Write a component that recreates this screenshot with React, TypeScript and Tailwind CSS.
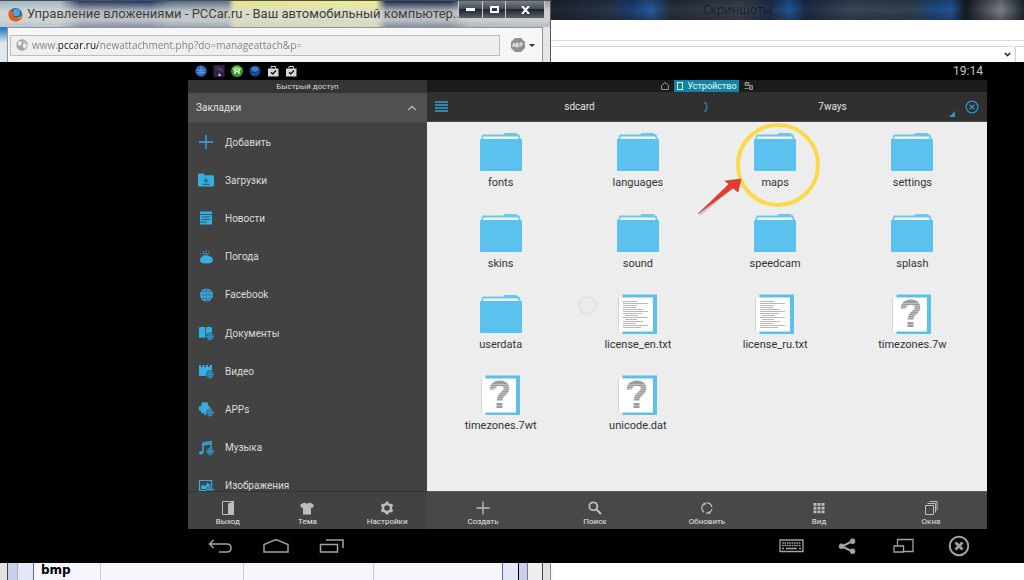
import type { ReactNode } from 'react';
import { ChevronDown, ChevronUp } from 'lucide-react';

type Entry = {
  name: string;
  kind: 'folder' | 'text' | 'unknown';
  marked?: boolean;
};

const BOOKMARKS: { label: string; icon: ReactNode }[] = [
  { label: 'Добавить', icon: <path d="M8 1v14M1 8h14" fill="none" stroke="currentColor" strokeWidth="1.3" /> },
  {
    label: 'Загрузки',
    icon: (
      <>
        <path d="M0 2.5Q0 1.5 1 1.5h4.5l1.5 1.7h8q1 0 1 1v9.3q0 1-1 1H1q-1 0-1-1z" fill="currentColor" />
        <path d="M8 5.5v4M6 8l2 2 2-2M4.5 12.3h7" fill="none" stroke="#2b6480" strokeWidth="1.2" />
      </>
    ),
  },
  {
    label: 'Новости',
    icon: (
      <>
        <path d="M2 1.5h12v13H2z" fill="currentColor" />
        <path d="M2 4.5h12M3.5 7h9M3.5 9.5h9M2 12h7" stroke="#424242" strokeWidth=".8" />
      </>
    ),
  },
  {
    label: 'Погода',
    icon: (
      <>
        <path d="M2 11a3.6 3.6 0 0 1 2.4-3.4C5 5.8 10.5 5.8 11.5 7.6A3.7 3.7 0 0 1 14.8 11c0 2.7-2.5 3.5-6.4 3.5S2 13.7 2 11z" fill="currentColor" />
        <path d="M3.5 5.5L2.5 4.5M5.5 3.500L5 2M8 3V1.300M10.500 3.800l.8-1.300M5 5.500c1.500-1.500 4-1.500 5.500 0" fill="none" stroke="currentColor" strokeWidth="1" />
      </>
    ),
  },
  {
    label: 'Facebook',
    icon: (
      <>
        <circle cx="8.500" cy="8" r="6.500" fill="currentColor" />
        <path d="M8.500 1.500v13M2 8h13M3.200 4.500h10.600M3.200 11.500h10.600M8.500 1.500C4.200 5 4.200 11 8.500 14.500M8.500 1.500c4.300 3.500 4.300 9.500 0 13" fill="none" stroke="#3b6a86" strokeWidth=".7" />
      </>
    ),
  },
  {
    label: 'Документы',
    icon: (
      <>
        <path d="M1 2.500q3.500-1.500 6.300 0v10.500q-3-1.200-6.300 0zM8 2.500q3-1.500 6 0v5H11q-3 1-3 5z" fill="currentColor" />
        <SmallGlobe />
      </>
    ),
  },
  {
    label: 'Видео',
    icon: (
      <>
        <path d="M1 2h2v2h1.500V2h2v2H8V2h2v2h1.500V2H14v5.500h-3q-3 1-2.800 5.500H1z" fill="currentColor" />
        <SmallGlobe />
      </>
    ),
  },
  {
    label: 'APPs',
    icon: (
      <>
        <path d="M3 5.500a3.500 4 0 0 1 7.500 0h1.800v3q-4 0-4.300 5.500H6.500l-.5-2H3V10L.8 9V5.500z" fill="currentColor" />
        <path d="M4 1l1.200 2M9.500 1L8.300 3" stroke="currentColor" strokeWidth=".8" />
        <SmallGlobe />
      </>
    ),
  },
  {
    label: 'Музыка',
    icon: (
      <>
        <path d="M5 12.500V3l8-1.500v8M5 5l8-1.500" fill="none" stroke="currentColor" strokeWidth="1.400" />
        <ellipse cx="3.200" cy="12.700" rx="2.200" ry="1.700" fill="currentColor" />
        <SmallGlobe />
      </>
    ),
  },
  {
    label: 'Изображения',
    icon: (
      <>
        <path d="M1.500 2.500h12v10h-12z" fill="none" stroke="currentColor" strokeWidth="1.200" />
        <path d="M3 11V8.500l2-2 2 2 2.500-4L12 7v4z" fill="currentColor" />
        <SmallGlobe />
      </>
    ),
  },
];

const FILES: Entry[] = [
  { name: 'fonts', kind: 'folder' },
  { name: 'languages', kind: 'folder' },
  { name: 'maps', kind: 'folder', marked: true },
  { name: 'settings', kind: 'folder' },
  { name: 'skins', kind: 'folder' },
  { name: 'sound', kind: 'folder' },
  { name: 'speedcam', kind: 'folder' },
  { name: 'splash', kind: 'folder' },
  { name: 'userdata', kind: 'folder' },
  { name: 'license_en.txt', kind: 'text' },
  { name: 'license_ru.txt', kind: 'text' },
  { name: 'timezones.7w', kind: 'unknown' },
  { name: 'timezones.7wt', kind: 'unknown' },
  { name: 'unicode.dat', kind: 'unknown' },
];

const SIDE_ACTIONS: { label: string; icon: ReactNode }[] = [
  {
    label: 'Выход',
    icon: (
      <>
        <path d="M2.500 1.500h11v13h-11z" fill="none" stroke="currentColor" strokeWidth="1" />
        <path d="M8 3.500l5.500-2v13H8z" fill="currentColor" />
      </>
    ),
  },
  { label: 'Тема', icon: <path d="M5 2.500q3 2 6 0l4 2.500-1.500 3-1.500-.5v7H4v-7l-1.500.5L1 5z" fill="currentColor" /> },
  {
    label: 'Настройки',
    icon: (
      <>
        <circle cx="8" cy="8" r="4" fill="none" stroke="currentColor" strokeWidth="2.400" />
        <path d="M8 1.500v2.300M8 12.200v2.300M2.400 4.700l2 1.200M11.600 10.100l2 1.200M2.400 11.300l2-1.200M11.600 5.900l2-1.200" stroke="currentColor" strokeWidth="2.800" />
      </>
    ),
  },
];

const MAIN_ACTIONS: { label: string; icon: ReactNode }[] = [
  { label: 'Создать', icon: <path d="M8 1.500v13M1.500 8h13" stroke="currentColor" strokeWidth="1.300" /> },
  {
    label: 'Поиск',
    icon: (
      <>
        <circle cx="6.300" cy="6.300" r="4" fill="none" stroke="currentColor" strokeWidth="1.800" />
        <path d="M9 9l5 5" stroke="currentColor" strokeWidth="2.200" />
      </>
    ),
  },
  {
    label: 'Обновить',
    icon: (
      <>
        <path d="M5 12.200A5 5 0 0 1 5.500 3.600M7.500 3a5 5 0 0 1 5.300 4M13 9a5 5 0 0 1-6 4" fill="none" stroke="currentColor" strokeWidth="1.300" />
        <path d="M4 3l3-.5-1 3zM12 13.500l-3 .3 1-3z" fill="currentColor" />
      </>
    ),
  },
  {
    label: 'Вид',
    icon: <path d="M2.500 3h3v2.800h-3zM6.500 3h3v2.800h-3zM10.500 3h3v2.800h-3zM2.500 6.700h3v2.800h-3zM6.500 6.700h3v2.800h-3zM10.500 6.700h3v2.800h-3zM2.500 10.400h3v2.800h-3zM6.500 10.400h3v2.800h-3zM10.500 10.400h3v2.800h-3z" fill="currentColor" />,
  },
  {
    label: 'Окна',
    icon: <path d="M2.500 5.500h8v9h-8zM4.500 3.500h8v9M6.500 1.500h7.500v9" fill="none" stroke="currentColor" strokeWidth="1" />,
  },
];

function SmallGlobe() {
  return (
    <g>
      <circle cx="12" cy="11.500" r="3.800" fill="#2c6f8e" />
      <path d="M12 7.700v7.600M8.200 11.500h7.600M12 7.700c-2.500 2-2.500 5.600 0 7.600c2.500-2 2.500-5.600 0-7.600" fill="none" stroke="#3f9cc4" strokeWidth=".7" />
    </g>
  );
}

function Glyph({ children }: { children: ReactNode }) {
  return (
    <svg aria-hidden="true" className="w-4 h-4 shrink-0" viewBox="0 0 16 16">
      {children}
    </svg>
  );
}

function FolderIcon() {
  return (
    <svg aria-hidden="true" className="w-[42px] h-10" viewBox="0 0 42 40">
      <path d="M1 8l1.500-5.500H23L25 1h11l3.500 2L41 8z" fill="#68c9ee" />
      <path d="M3 7.500l.5-3H38l1 3z" fill="#f2f4f2" />
      <rect y="7" width="42" height="32" rx="1" fill="#5bc1ee" />
    </svg>
  );
}

function PageIcon({ kind }: { kind: 'text' | 'unknown' }) {
  return (
    <svg aria-hidden="true" className="w-[42px] h-10" viewBox="0 0 42 40">
      <path d="M5.500 .5H40V40H5.500z" fill="#5bc1e9" />
      <path d="M2 3.500h34v34H2z" fill="#fff" />
      <path d="M1.500 3.500v34" stroke="#d4d4d4" strokeWidth="1" />
      {kind === 'text' ? (
        <path
          d="M6 7.500h14M6 9.500h25M6 11.500h14M6 13.500h13M6 15.500h20M6 17.500h25M6 19.500h19M8 21.500h13M6 23.500h25M8 25.500h12M6 27.500h20M6 29.500h13M6 31.500h25M6 33.500h18"
          stroke="#b0b0b0"
          strokeWidth=".9"
        />
      ) : (
        <>
          <path d="M12.500 14.500C11.500 6.500 27 6 26.500 13.500C26.500 19 19.500 18.500 19.500 25.500" fill="none" stroke="#9c9c9c" strokeWidth="5.500" />
          <path d="M16.500 28h6v5h-6z" fill="#9c9c9c" />
          <path d="M8 9.500h22M8 11.500h22M8 13.500h22M8 15.500h22M8 17.500h22M8 19.500h22M8 21.500h22M8 23.500h22M8 30.500h22" stroke="#fff" strokeWidth=".6" opacity=".6" />
        </>
      )}
    </svg>
  );
}

function PlayBag() {
  return (
    <svg aria-hidden="true" className="w-[18px] h-3" viewBox="0 0 18 12">
      <path d="M4 3.500h10.500v8H4z" fill="#d8d8d8" />
      <path d="M7 3.500v-2h4.500v2" fill="none" stroke="#d8d8d8" strokeWidth="1" />
      <path d="M7 7.300l1.700 1.700L12 5.500" fill="none" stroke="#111" strokeWidth="1.300" />
    </svg>
  );
}

function BrowserWindow() {
  return (
    <section className="w-[551px] min-w-0 flex flex-col border-t border-[#4b4f52] border-r border-r-[#55585c] bg-[linear-gradient(90deg,transparent_8px,#e3e5e7_8px),linear-gradient(180deg,#2f80bd_28px,#dfe7ee_42px)]">
      <header className="h-[26px] flex items-start bg-[linear-gradient(180deg,rgba(225,225,225,0)_0%,rgba(220,220,216,.8)_40%,rgba(215,215,212,.85)_75%,rgba(200,208,216,.6)_100%),linear-gradient(90deg,#9db4c8_0,#a8b6c0_60px,#27395c_80px,#1b3263_150px,#526a83_170px,#5d7488_228px,#e6e588_234px,#eeee8c_376px,#192c50_386px,#182949_450px,#8c9195_470px,#9aa0a5_551px)]">
        <div className="flex-1 flex items-center gap-1 pl-2 h-[26px] min-w-0">
          <svg aria-hidden="true" className="w-[15px] h-[15px] shrink-0" viewBox="0 0 16 16">
            <circle cx="8" cy="8" r="7" fill="#2565a8" />
            <circle cx="9" cy="6" r="3.800" fill="#48a8db" />
            <path d="M1 4C-1 11 3 15.500 8 15.500c5 0 8-4 7.500-8.500-.8 3-3 4.500-5.500 4.500C7 11.500 5 10 5 8l2-1-2-1.500L2.500 3z" fill="#e65f15" />
            <path d="M15.500 7c-.8 3-3 4.500-5.500 4.500 2 1.500 4 .5 5.500-4.500z" fill="#f9c42c" />
          </svg>
          <h1 className="text-[13px] text-[#3d3d3d] whitespace-nowrap font-['Roboto',sans-serif]">Управление вложениями - PCCar.ru - Ваш автомобильный компьютер...</h1>
        </div>
        <div className="flex shrink-0 h-[18px] mr-[5px] border border-t-0 border-[#c8ccd0] rounded-b-xs divide-x divide-[#c8ccd0] bg-[linear-gradient(180deg,#777e88,#454c57_45%,#20252e_50%,#5b626d)]">
          <button type="button" aria-label="Свернуть" className="w-6 flex items-center justify-center">
            <span className="w-[9px] h-[3px] bg-white" />
          </button>
          <button type="button" aria-label="Развернуть" className="w-[23px] flex items-center justify-center">
            <span className="w-[9px] h-[7px] border-2 border-white" />
          </button>
          <button type="button" aria-label="Закрыть" className="w-[38px] flex items-center justify-center">
            <svg className="w-[9px] h-2" viewBox="0 0 9 8">
              <path d="M1 0l7 8M8 0L1 8" stroke="#fff" strokeWidth="2" />
            </svg>
          </button>
        </div>
      </header>
      <div className="flex-1 ml-[7px] mr-[7px] border border-b-0 border-[#8f969c] bg-[#f6f6f6] flex items-center pl-[2px] pr-[7px]">
        <div className="flex-1 h-[21px] flex items-center gap-1 pl-[5px] border border-[#bcbcbc] bg-[#efefef]">
          <svg aria-hidden="true" className="w-3 h-3 shrink-0" viewBox="0 0 12 12">
            <circle cx="6" cy="6" r="5.700" fill="#a5a5a5" />
            <path d="M2 3l3-1 1 2-2 3-2-1zM7 5l3-1 1 3-3 3-1-2zM7 1.500l2 1-1 1z" fill="#ececec" />
          </svg>
          <input
            aria-label="Адрес"
            readOnly
            defaultValue="www.pccar.ru/newattachment.php?do=manageattach&p="
            className="flex-1 min-w-0 text-[10px] outline-none text-transparent bg-clip-text bg-[linear-gradient(90deg,#7d7d7d_26px,#111_26px,#111_66px,#7d7d7d_66px)] font-['Open_Sans',sans-serif]"
          />
        </div>
        <button type="button" aria-label="Adblock Plus" className="flex items-center gap-1 ml-[11px]">
          <svg className="w-[14px] h-[14px]" viewBox="0 0 14 14">
            <path d="M4 0h6l4 4v6l-4 4H4l-4-4V4z" fill="#909090" />
            <path d="M2 9V6l1-1 1 1v3M2 7.500h2M5.500 9V5H7v2H5.500M7 7v2H5.500M9 9V5h2v2H9" fill="none" stroke="#f4f4f4" strokeWidth=".9" />
          </svg>
          <svg className="w-[6px] h-[3px]" viewBox="0 0 6 3">
            <path d="M0 0h6L3 3z" fill="#333" />
          </svg>
        </button>
      </div>
    </section>
  );
}

function BackgroundWindow() {
  return (
    <section className="flex-1 min-w-0 flex flex-col bg-white">
      <header className="h-5 shrink-0 pl-[152px] bg-[linear-gradient(180deg,rgba(10,14,24,.3),transparent_50%,rgba(20,20,20,.35)),linear-gradient(90deg,#1d2430_0,#29344a_60px,#1c3d70_80px,#245a9c_100px,#27303e_120px,#3e4350_190px,#1e3050_220px,#1f5596_238px,#1c2c48_255px,#3a4554_300px,#33414f_360px,#1d4a86_385px,#225495_400px,#131922_415px,#7b8088_450px,#20262f_473px)]">
        <h2 className="text-xs leading-5 text-[#1a1e24]">Скриншоты</h2>
      </header>
      <div className="h-[21px] shrink-0 border-b border-[#dcdcdc]" />
      <div className="flex-1 mt-[5px] flex justify-end border-t border-[#dcdcdc]">
        <button type="button" aria-label="Показать список" className="w-4 flex items-center justify-center border-r border-[#cfcfcf]">
          <ChevronDown className="w-[9px] h-[9px] text-[#333]" strokeWidth={4} />
        </button>
        <div className="w-2" />
      </div>
    </section>
  );
}

function StatusBar() {
  return (
    <div className="h-[18px] shrink-0 flex items-center pl-1 pr-1">
      <div className="flex-1 flex items-center">
        <svg aria-hidden="true" className="w-[18px] h-3" viewBox="0 0 18 12">
          <circle cx="9" cy="6" r="5.700" fill="#3465b4" />
          <path d="M9 2v7M5.500 4.500l7 3.500M12.500 4.500L5.500 8" stroke="#7ea6e4" strokeWidth="1.100" />
          <circle cx="9" cy="6" r="1.500" fill="#4d86d6" />
        </svg>
        <svg aria-hidden="true" className="w-[18px] h-3" viewBox="0 0 18 12">
          <rect x="3.500" width="11" height="12" fill="#29264c" />
          <path d="M5 2l7 1 1 4-5-2z" fill="#71304f" />
          <path d="M8 11l1.500-3 1.500 3z" fill="#ddd" />
        </svg>
        <svg aria-hidden="true" className="w-[18px] h-3" viewBox="0 0 18 12">
          <circle cx="9" cy="6" r="6" fill="#3d9c2b" />
          <path d="M4 4q5-5 10 0l-3 1.500H7z" fill="#8fd662" />
          <path d="M7 4v5M11 4v5M7 6.500h4" stroke="#e9ffdc" strokeWidth="1.300" />
        </svg>
        <svg aria-hidden="true" className="w-[18px] h-3" viewBox="0 0 18 12">
          <circle cx="9" cy="6" r="5.600" fill="#173f86" />
          <path d="M4.500 4Q8 0 13 3l-1 3-4 1z" fill="#3380ca" />
          <path d="M5 9q4 2 7-1" fill="none" stroke="#2c68a8" strokeWidth="1" />
        </svg>
        <PlayBag />
        <PlayBag />
      </div>
      <time className="text-xs leading-[18px] text-[#c4c4c4]">19:14</time>
    </div>
  );
}

function Sidebar() {
  return (
    <aside className="w-[239px] shrink-0 flex flex-col bg-[#424242]">
      <h2 className="h-[13px] shrink-0 bg-[#343434] text-center text-[8px] leading-[13px] text-[#d5d5d5]">Быстрый доступ</h2>
      <button type="button" className="h-[30px] shrink-0 flex items-center justify-between pl-2 pr-2 bg-[#505050] border-b border-[#474747] text-[10px] text-[#e2e2e2]">
        Закладки
        <ChevronUp className="w-[14px] h-[14px] text-[#b5b5b5]" strokeWidth={2} />
      </button>
      <nav className="flex-1 min-h-0 overflow-hidden">
        <ul className="h-[382px] grid grid-rows-10">
          {BOOKMARKS.map((b) => (
            <li key={b.label} className="flex">
              <a href="#" className="flex-1 flex items-center gap-[11px] pl-[10px] text-[10px] text-[#dcdcdc]">
                <span className="text-[#35aee2]">
                  <Glyph>{b.icon}</Glyph>
                </span>
                {b.label}
              </a>
            </li>
          ))}
        </ul>
      </nav>
      <div className="h-[38px] shrink-0 grid grid-cols-3 border-t border-[#353535] bg-[#424242]">
        {SIDE_ACTIONS.map((a) => (
          <Action key={a.label} label={a.label} icon={a.icon} />
        ))}
      </div>
    </aside>
  );
}

function Action({ label, icon }: { label: string; icon: ReactNode }) {
  return (
    <button type="button" className="flex flex-col items-center justify-end pb-px text-[8px] leading-3 text-[#e4e4e4]">
      <span className="text-[#bdbdbd]">
        <Glyph>{icon}</Glyph>
      </span>
      {label}
    </button>
  );
}

function FilePane() {
  return (
    <main className="flex-1 min-w-0 flex flex-col bg-[#ededed]">
      <div className="h-3 shrink-0 flex items-center justify-center gap-[5px] bg-[#1b1b1b]">
        <button type="button" aria-label="Домой">
          <svg className="w-2 h-2 block" viewBox="0 0 8 8">
            <path d="M.5 3.500L4 .5l3.500 3v4h-7z" fill="none" stroke="#999" strokeWidth="1" />
          </svg>
        </button>
        <button type="button" className="h-3 flex items-center gap-1 pl-[3px] pr-[2px] bg-[#1583a5] text-[9px] leading-3 text-[#e8f6fa]">
          <span className="w-[6px] h-2 border border-[#d5f1fa]" />
          Устройство
        </button>
        <button type="button" aria-label="Сеть">
          <svg className="w-[9px] h-2 block" viewBox="0 0 9 8">
            <path d="M1 .5h4v3H1zM.5 6.500h4M5.500 3.500h3v4h-3z" fill="#555" stroke="#999" strokeWidth=".9" />
          </svg>
        </button>
      </div>
      <div className="h-[30px] shrink-0 flex items-center bg-[#303030] border-b border-[#4a4a4a] text-[10px] text-[#e4e4e4]">
        <button type="button" aria-label="Меню" className="w-7 flex justify-center">
          <svg className="w-[13px] h-[11px]" viewBox="0 0 13 11">
            <path d="M0 1h13M0 4h13M0 7h13M0 10h13" stroke="#2fa3cf" strokeWidth="1.300" />
          </svg>
        </button>
        <button type="button" className="flex-1">sdcard</button>
        <svg aria-hidden="true" className="w-1 h-3" viewBox="0 0 4 12">
          <path d="M.5 1Q5.500 6 .5 11" fill="none" stroke="#2f92c4" strokeWidth="1.100" />
        </svg>
        <button type="button" className="flex-1 relative h-full">
          7ways
          <svg aria-hidden="true" className="absolute right-0.5 bottom-1 w-1.5 h-1.5" viewBox="0 0 6 6">
            <path d="M6 0v6H0z" fill="#3296c0" />
          </svg>
        </button>
        <button type="button" aria-label="Закрыть окно" className="w-[30px] flex justify-center">
          <svg className="w-[14px] h-[14px]" viewBox="0 0 14 14">
            <circle cx="7" cy="7" r="5.900" fill="none" stroke="#2f9cca" strokeWidth="1.200" />
            <path d="M4.700 4.700l4.600 4.600M9.300 4.700L4.700 9.300" stroke="#2f9cca" strokeWidth="1.200" />
          </svg>
        </button>
      </div>

      <div className="relative flex-1 min-h-0">
        <ul className="grid grid-cols-4 auto-rows-[81px] pt-[10px] pl-[5px] pr-[6px]">
          {FILES.map((f) => (
            <li key={f.name} className="relative">
              <button type="button" className="w-full flex flex-col items-center gap-1 text-[11px] leading-[14px] text-[#333]">
                {f.kind === 'folder' ? <FolderIcon /> : <PageIcon kind={f.kind} />}
                {f.name}
              </button>
              {f.marked && (
                <svg aria-hidden="true" className="absolute left-1/2 -top-3 -ml-20 w-[130px] h-[100px] pointer-events-none" viewBox="0 0 130 100">
                  <circle cx="83" cy="45" r="40" fill="none" stroke="#fada4a" strokeWidth="4" />
                  <path d="M5 95L39 66" stroke="#888" strokeWidth="2" opacity=".35" />
                  <path d="M3 94L34 64l-4-3 16-2-3 13-5-4z" fill="#e93a30" stroke="#b9302b" strokeWidth=".6" />
                </svg>
              )}
            </li>
          ))}
        </ul>
        {/* last touch point */}
        <span className="absolute left-[151px] top-[174px] w-[19px] h-[19px] rounded-full border-2 border-[#dfe2e5] bg-[#e8ecef]" />
      </div>

      <div className="h-[38px] shrink-0 grid grid-cols-5 border-t border-[#5b5b5b] bg-[#484848]">
        {MAIN_ACTIONS.map((a) => (
          <Action key={a.label} label={a.label} icon={a.icon} />
        ))}
      </div>
    </main>
  );
}

function NavButton({ label, children }: { label: string; children: ReactNode }) {
  return (
    <button type="button" aria-label={label} className="w-14 flex items-center justify-center text-[#a2a2a2]">
      <svg className="w-[26px] h-[22px]" viewBox="0 0 26 22" fill="none" stroke="currentColor" strokeWidth="1.500">
        {children}
      </svg>
    </button>
  );
}

function NavBar() {
  return (
    <div className="h-[34px] shrink-0 flex justify-between pl-1">
      <div className="flex">
        <NavButton label="Назад">
          <path d="M6.500 5L2.500 9l4 4M3 9h17q4 0 4 4t-4 4h-8" />
        </NavButton>
        <NavButton label="Главный экран">
          <path d="M1 17V9.500L13 4.500l12 5V17z" />
        </NavButton>
        <NavButton label="Недавние">
          <path d="M1.500 9.500h17v7.500h-17zM7 5h17v8" />
        </NavButton>
      </div>
      <div className="flex">
        <NavButton label="Клавиатура">
          <path d="M2 5h23v11.500H2z" strokeWidth="1.300" />
          <path d="M4 8h19M4 10.500h19" strokeWidth="1.700" strokeDasharray="1.700 .7" />
          <path d="M4 13.500h2M8 13.500h11M21 13.500h2" strokeWidth="1.700" />
        </NavButton>
        <NavButton label="Поделиться">
          <path d="M18.500 6L8 11.500l10.500 5" strokeWidth="2" />
          <path d="M18.500 3.500a2.800 2.800 0 1 0 .1 0zM7.500 8.500a2.800 2.800 0 1 0 .1 0zM18.500 13.500a2.800 2.800 0 1 0 .1 0z" fill="currentColor" stroke="none" />
        </NavButton>
        <NavButton label="Экран">
          <path d="M7.500 10V4.500h15.500v12H14M4 11h9.500v6H4z" strokeWidth="1.300" />
        </NavButton>
        <NavButton label="Выключить">
          <circle cx="13" cy="11" r="9.300" strokeWidth="2" />
          <path d="M9.500 7.500l7 7M16.500 7.500l-7 7" strokeWidth="2.800" />
        </NavButton>
      </div>
    </div>
  );
}

function WindowFooter() {
  return (
    <footer className="h-[17px] shrink-0 flex bg-white overflow-hidden">
      <div className="w-[551px] flex px-[7px] bg-[#e2e2de] border-r border-[#8d8d8d] shadow-md">
        <div className="flex-1 flex pr-[14px] bg-[#efefef] border-l border-r border-[#3b4563]">
          <div className="flex-1 flex pl-[9px] pr-2 bg-[#cbd0e8] border-r border-[#7277bb]">
            <div className="flex-1 flex px-[15px] bg-[#e2e8f6] border-l border-l-[#b0b0b0] border-r border-r-black">
              <table className="flex-1 table-fixed border-collapse bg-[#f4f5fd] border-x border-[#6267b7]">
                <tbody>
                  <tr>
                    <th className="w-[67px] p-0 pl-[7px] text-left align-top text-xs leading-[14px] text-black font-['DejaVu_Sans',sans-serif] font-bold">bmp</th>
                    <td className="w-[143px] border-l border-[#cbccd8]" />
                    <td className="w-[130px] border-l border-[#cbccd8]" />
                    <td className="border-l border-[#cbccd8]" />
                  </tr>
                </tbody>
              </table>
            </div>
          </div>
        </div>
      </div>
    </footer>
  );
}

export default function App() {
  return (
    <div className="h-screen flex flex-col overflow-hidden bg-white font-['Roboto',sans-serif]">
      <div className="h-[62px] shrink-0 flex font-['Open_Sans',sans-serif]">
        <BrowserWindow />
        <BackgroundWindow />
      </div>
      <div className="flex-1 min-h-0 flex flex-col pl-[188px] pr-[37px] bg-black">
        <StatusBar />
        <div className="flex-1 min-h-0 flex">
          <Sidebar />
          <FilePane />
        </div>
        <NavBar />
      </div>
      <WindowFooter />
    </div>
  );
}
